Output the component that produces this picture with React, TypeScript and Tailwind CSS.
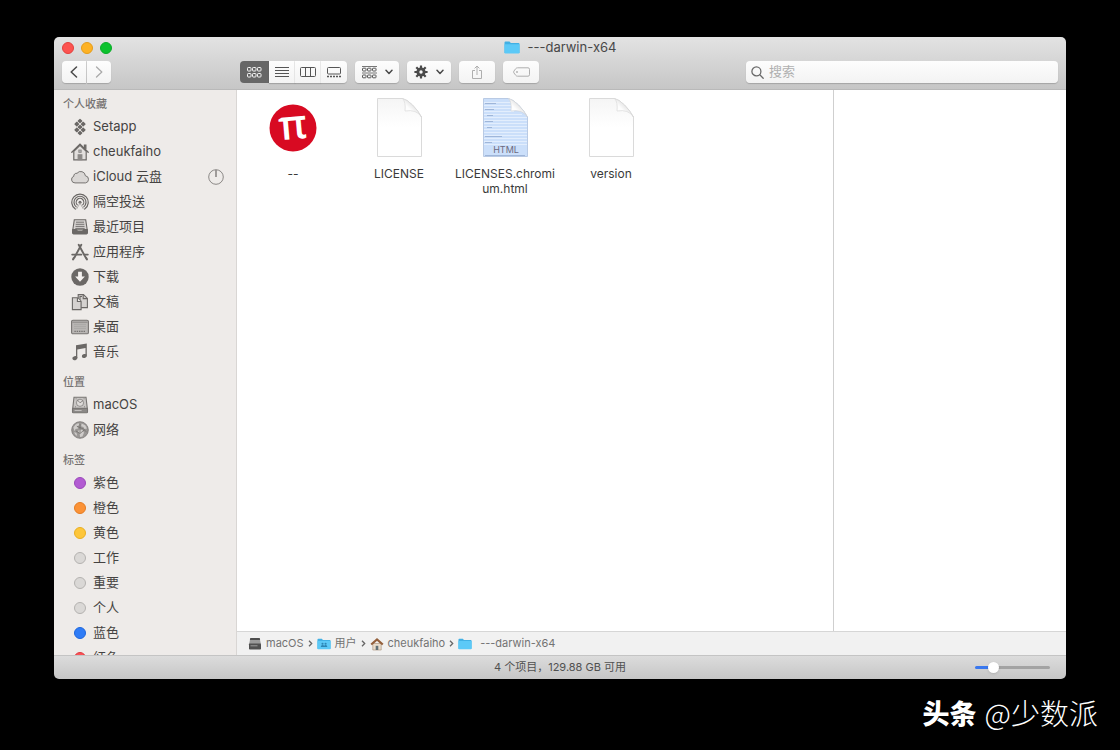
import React from 'react';
import clsx from 'clsx';

type IconProps = { className?: string };

const SetappIcon = () => (
  <svg viewBox="0 0 18 18" className="w-[18px] h-[18px]" fill="#6b6866">
    <rect x="7.2" y="1.2" width="3.6" height="3.6" rx="0.6" transform="rotate(45 9 3)" />
    <rect x="3.9" y="4.2" width="3.8" height="3.8" rx="0.6" transform="rotate(45 5.8 6.1)" />
    <rect x="10.3" y="4.2" width="3.8" height="3.8" rx="0.6" transform="rotate(45 12.2 6.1)" />
    <rect x="7.2" y="7.2" width="3.6" height="3.6" rx="0.6" transform="rotate(45 9 9)" />
    <rect x="3.9" y="10" width="3.8" height="3.8" rx="0.6" transform="rotate(45 5.8 11.9)" />
    <rect x="10.3" y="10" width="3.8" height="3.8" rx="0.6" transform="rotate(45 12.2 11.9)" />
    <rect x="7.2" y="13.2" width="3.6" height="3.6" rx="0.6" transform="rotate(45 9 15)" />
  </svg>
);

const HomeIcon = () => (
  <svg viewBox="0 0 18 18" className="w-[18px] h-[18px]" fill="none" stroke="#6b6866" strokeWidth="1.2">
    <path d="M2.8 8.2v8.6h12.4V8.2L9 2.4z" fill="#e2dfdd" />
    <path d="M.8 9.2 9 1.2l8.2 8" strokeLinecap="round" strokeWidth="1.3" />
    <path d="M13.4 5V2.2h1.5v4" fill="#6b6866" />
    <path d="M7.2 16.6v-4.8h3.6v4.8z" fill="#8b8886" stroke="#8b8886" />
    <rect x="7.8" y="7" width="2.4" height="2.4" fill="#aaa" stroke="#8b8886" strokeWidth="0.8" />
  </svg>
);

const CloudIcon = () => (
  <svg viewBox="0 0 18 18" className="w-[18px] h-[18px]" fill="#dad7d5" stroke="#777472" strokeWidth="1">
    <path d="M4 14.9A3.4 3.4 0 0 1 2.8 8.3a2.7 2.7 0 0 1 3.2-3A4.7 4.7 0 0 1 14.4 7.800a3.600 3.600 0 0 1 .2 7.100z" />
  </svg>
);

const AirDropIcon = () => (
  <svg viewBox="0 0 18 18" className="w-[18px] h-[18px]" fill="none" stroke="#6b6866" strokeWidth="1.2" strokeLinecap="round">
    <path d="M4.3 16.1a8.2 8.2 0 1 1 9.4 0" />
    <path d="M5.2 13.9a6 6 0 1 1 7.6 0" />
    <path d="M6.3 11.9a3.8 3.8 0 1 1 5.4 0" />
    <circle cx="9" cy="9.3" r="1.5" fill="#6b6866" stroke="none" />
    <path d="m9 10-3.2 5.8M9 10l3.2 5.8" strokeWidth="0.8" stroke="#a5a2a0" />
  </svg>
);

const RecentsIcon = () => (
  <svg viewBox="0 0 18 18" className="w-[18px] h-[18px]" fill="none" stroke="#6b6866">
    <path d="M3.3 1.8h11.4l1.5 9.9H1.8z" fill="#d5d2d0" strokeWidth="1.1" />
    <path d="M5 4.2h8M4.7 6.3h8.6M4.5 8.4h9M4.3 10.4h9.4" strokeWidth="0.9" />
    <path d="M1.5 11.5h4l1 1.6h5l1-1.6h4V15q0 1-1 1h-13q-1 0-1-1z" fill="#6b6866" />
  </svg>
);

const AppsIcon = () => (
  <svg viewBox="0 0 18 18" className="w-[18px] h-[18px]" fill="none" stroke="#6b6866" strokeWidth="1.9" strokeLinecap="round">
    <path d="M10.3 1.8 3.6 14.2M7.7 1.8l6.9 12.600" />
    <path d="M1.2 11.6h9.200M13.400 11.6h3.400" />
    <path d="m3 14.800-.9 1.500M15 14.800l.9 1.500" strokeWidth="2.2" />
  </svg>
);

const DownloadIcon = () => (
  <svg viewBox="0 0 18 18" className="w-[18px] h-[18px]">
    <circle cx="9" cy="9" r="8.7" fill="#6b6866" />
    <path d="M7.1 3.8h3.8v4.600h3L9 13.800 4.100 8.400h3z" fill="#f4f1ef" />
  </svg>
);

const DocumentsIcon = () => (
  <svg viewBox="0 0 18 18" className="w-[18px] h-[18px]" fill="#d5d2d0" stroke="#6b6866" strokeWidth="1.1">
    <path d="M7.2 1.6h5.3l3.9 3.8v9.2H7.2z" />
    <path d="M12.2 1.8v3.8h4M9 8.4V3.5h2" fill="none" />
    <path d="M1.4 4.8h5l3.7 3.5v8.3H1.4z" />
    <path d="M6.4 4.9v3.6h3.6" fill="#efecea" />
  </svg>
);

const DesktopIcon = () => (
  <svg viewBox="0 0 18 18" className="w-[18px] h-[18px]">
    <rect x="0.6" y="2.200" width="16.8" height="13.6" rx="1.4" fill="#b9b6b4" stroke="#777472" strokeWidth="1.1" />
    <path d="M1.4 4.2h15.2" stroke="#8a8785" strokeWidth="1" />
    <path d="M3 6.4h12M3 8.4h12M3 10.4h12" stroke="#a19e9c" strokeWidth="0.6" />
    <path d="M3.4 13.4h11.2" stroke="#777472" strokeWidth="1.4" strokeDasharray="1.4 0.9" />
  </svg>
);

const MusicIcon = () => (
  <svg viewBox="0 0 18 18" className="w-[18px] h-[18px]" fill="#6b6866">
    <path d="M5 2.200 15.800.4v12.200h-1.300V4.900l-8.200 1.500v8.500H5z" />
    <ellipse cx="3.900" cy="15.200" rx="2.600" ry="2" transform="rotate(-15 3.900 15.200)" />
    <ellipse cx="13.400" cy="13" rx="2.600" ry="2" transform="rotate(-15 13.400 13)" />
  </svg>
);

const DiskIcon = () => (
  <svg viewBox="0 0 18 18" className="w-[18px] h-[18px]" stroke="#777472">
    <path d="M3 1.2h12l1.3 11.3H1.7z" fill="#c9c6c4" strokeWidth="1.1" />
    <rect x="1.5" y="12.3" width="15" height="4.4" rx="0.8" fill="#8b8886" strokeWidth="1.1" />
    <circle cx="9" cy="6.8" r="3.6" fill="#dedbd9" strokeWidth="0.7" />
    <path d="m6.4 4 2.6 2.8L12 4.6M4.6 2.8h1M12.6 2.8h1M4 10.8h1M13 10.8h1" fill="none" strokeWidth="0.8" />
    <path d="M3.6 14.5h7" stroke="#c9c6c4" strokeWidth="0.9" />
  </svg>
);

const NetworkIcon = () => (
  <svg viewBox="0 0 18 18" className="w-[18px] h-[18px]">
    <circle cx="9" cy="9" r="8.3" fill="#9a9795" stroke="#777472" strokeWidth="0.8" />
    <path d="M2.4 6.4Q4 3 7.4 1.9l.9 2-2 1.4.8 2.2-2.6.5-1 2.2z" fill="#cfccca" />
    <path d="m10.6 2.4 3.6 1.8 1.8 3.2-2.5.7-1.1-2-2.2-.8z" fill="#cfccca" />
    <path d="m8.2 8.6 3.3.4 1.5 2.8-1.6 3.8-2.3.5-.5-3.5-1.5-2z" fill="#cfccca" />
    <path d="m3 11.2 2.4.6.8 3-1.4-.6z" fill="#cfccca" />
    <path d="M5.8 5.2 12.4 8l3.2 3M5 10l4 2.6 4.4-3.8M9 3v9" stroke="#6b6866" strokeWidth="0.7" fill="none" />
  </svg>
);

const FolderIcon: React.FC<IconProps> = ({ className }) => (
  <svg viewBox="0 0 16 13" className={className}>
    <path d="M.5 1.6q0-1 1-1h4l1.3 1.3h7.7q1 0 1 1v9H.5z" fill="#41b0e4" />
    <path d="M.5 3.2h15v8.4q0 .9-.9.9H1.4q-.9 0-.9-.9z" fill="#5cc9f7" />
  </svg>
);

const UsersFolderIcon = () => (
  <svg viewBox="0 0 16 13" className="w-[14px] h-[12px]">
    <path d="M.5 1.6q0-1 1-1h4l1.3 1.3h7.7q1 0 1 1v9H.5z" fill="#41b0e4" />
    <path d="M.5 3.2h15v8.4q0 .9-.9.9H1.4q-.9 0-.9-.9z" fill="#5cc9f7" />
    <circle cx="6.3" cy="6.2" r="1.2" fill="#2d86b5" />
    <circle cx="9.8" cy="6.2" r="1.2" fill="#2d86b5" />
    <path d="M4.3 10q0-2.400 2-2.400t1.800 1.400Q8.200 7.600 9.800 7.600q2 0 2 2.400z" fill="#2d86b5" />
  </svg>
);

const DriveIcon = () => (
  <svg viewBox="0 0 14 14" className="w-[14px] h-[14px]">
    <path d="M2.4 1h9.2L13 7.500H1z" fill="#9a9a9a" />
    <path d="M2.4 1h9.2l.5 2H1.900z" fill="#4e4e4e" />
    <rect x="1" y="6.500" width="12" height="6" rx="0.800" fill="#505050" />
    <path d="M2.500 8.800h7" stroke="#9a9a9a" />
  </svg>
);

const SmallHomeIcon = () => (
  <svg viewBox="0 0 14 14" className="w-[14px] h-[14px]">
    <path d="M2.8 6.500h8.400V13H2.800z" fill="#e9dccb" stroke="#a58c72" strokeWidth="0.600" />
    <path d="M1.200 7.500 7 2.400l5.800 5.100" fill="none" stroke="#94603c" strokeWidth="2.200" />
    <path d="M5.700 8.800h2.600V13H5.700z" fill="#5f6f77" />
  </svg>
);

const PiIcon = () => (
  <svg viewBox="0 0 64 64" className="w-16 h-16">
    <circle cx="32" cy="32" r="23.5" fill="#d80a22" />
    <text
      x="32"
      y="43"
      textAnchor="middle"
      fontSize="41"
      fontWeight="600"
      fill="#fff"
      fontFamily="'Open Sans', sans-serif"
      transform="rotate(-5 32 32)"
    >
      π
    </text>
  </svg>
);

const PageIcon: React.FC<{ html?: boolean }> = ({ html }) => (
  <svg viewBox="0 0 64 64" className="w-16 h-16">
    <defs>
      <linearGradient id="curl" x1="0" y1="1" x2="1" y2="0">
        <stop offset="0" stopColor="#fff" />
        <stop offset="0.4" stopColor="#fdfdfd" />
        <stop offset="0.6" stopColor="#e6e6e6" />
        <stop offset="1" stopColor="#fafafa" />
      </linearGradient>
      <linearGradient id="paper" x1="0" y1="0" x2="0" y2="1">
        <stop offset="0" stopColor="#f5f5f5" />
        <stop offset="0.5" stopColor="#fff" />
      </linearGradient>
    </defs>
    <path
      d="M10.5 2.5h25q4.500 1 10 6.500t9 12v39.500h-44z"
      fill={html ? '#cbdffa' : 'url(#paper)'}
      stroke={html ? '#b9cae4' : '#dadada'}
      strokeWidth="1"
    />
    {html && (
      <>
        <g fill="none">
          <path d="M11 6.500h27M11 9.500h28M11 12.500h28M11 15.500h30M11 18.500h38M11 21.500h43M11 24.500h43M11 27.500h43M11 30.500h43M11 33.500h43M11 36.500h43M11 39.500h43M11 42.500h43M11 45.500h43M11 48.500h43" stroke="#e3eefd" />
          <path d="M12 7.500h11M12 13.500h9M14 19.500h6M12 25.500h8M14 31.500h5M12 40.500h17M12 46.500h7M12 59.500h40" stroke="#9fb6d9" />
        </g>
        <text x="33" y="57" textAnchor="middle" fontSize="9" fill="#6d6a80" fontFamily="Inter, sans-serif">HTML</text>
      </>
    )}
    <path d="M35.500 2.500q3.500 3.500 2.500 12.500 11.500-2 16.500 6-3.500-6.500-9-12t-10-6.500z" fill="url(#curl)" stroke="#d4d4d4" strokeWidth="0.6" />
  </svg>
);

const ChevronDown = () => (
  <svg viewBox="0 0 8 6" className="w-2 h-1.5" fill="none" stroke="#4a4a4a" strokeWidth="1.5" strokeLinecap="round" strokeLinejoin="round">
    <path d="m1 1.2 3 3.2 3-3.2" />
  </svg>
);

const GridGlyph = () => (
  <svg viewBox="0 0 15 11" className="w-[15px] h-[11px]" fill="none" stroke="#f5f5f5" strokeWidth="1">
    {[0.5, 5.5, 10.5].map((x) => (
      <g key={x}>
        <rect x={x} y="0.5" width="3.5" height="3.5" rx="0.8" />
        <rect x={x} y="6.5" width="3.5" height="3.5" rx="0.8" />
      </g>
    ))}
  </svg>
);

const ListGlyph = () => (
  <svg viewBox="0 0 14 11" className="w-[14px] h-[11px]" stroke="#555">
    <path d="M0 .5h14M0 3.500h14M0 6.500h14M0 9.500h14" />
  </svg>
);

const ColumnsGlyph = () => (
  <svg viewBox="0 0 16 11" className="w-4 h-[11px]" fill="none" stroke="#555">
    <rect x="0.5" y="0.5" width="15" height="9" rx="1" />
    <path d="M5.500.5v9M10.500.5v9" />
  </svg>
);

const GalleryGlyph = () => (
  <svg viewBox="0 0 14 11" className="w-[14px] h-[11px]" fill="none" stroke="#555">
    <rect x="0.5" y="0.5" width="13" height="6.500" rx="1" />
    <path d="M0 9.500h14" strokeWidth="1.5" strokeDasharray="2 1" />
  </svg>
);

const ArrangeGlyph = () => (
  <svg viewBox="0 0 15 13" className="w-[15px] h-[13px]" fill="none" stroke="#555" strokeWidth="1">
    <path d="M0 .5h15M0 7h15" strokeWidth="0.8" />
    {[0.5, 5.5, 10.5].map((x) => (
      <g key={x}>
        <rect x={x} y="2.2" width="3.5" height="2.8" rx="0.6" />
        <rect x={x} y="9" width="3.5" height="2.8" rx="0.6" />
      </g>
    ))}
  </svg>
);

const GearGlyph = () => (
  <svg viewBox="0 0 14 14" className="w-3.5 h-3.5">
    <path d="M7 .4v13.2M.4 7h13.2M2.3 2.3l9.4 9.4M11.7 2.3l-9.4 9.4" stroke="#4a4a4a" strokeWidth="2.2" />
    <circle cx="7" cy="7" r="4.6" fill="#4a4a4a" />
    <circle cx="7" cy="7" r="1.7" fill="#f8f8f8" />
  </svg>
);

const ShareGlyph = () => (
  <svg viewBox="0 0 12 15" className="w-3 h-[15px]" fill="none" stroke="#aeaeae">
    <path d="M4 5.500H1.500v8h9v-8H8M6 10V1.200M3.600 3.400 6 1l2.400 2.400" />
  </svg>
);

const TagGlyph = () => (
  <svg viewBox="0 0 17 10" className="w-[17px] h-2.5" fill="none" stroke="#aeaeae">
    <path d="M4.500.8H15q1.500 0 1.500 1.500v5.400q0 1.500-1.500 1.500H4.500q-1 0-1.700-.8L.9 5.900q-.5-.9 0-1.800l1.900-2.500q.7-.8 1.700-.8z" />
    <circle cx="4" cy="5" r="0.6" />
  </svg>
);

const favorites = [
  { name: 'Setapp', icon: SetappIcon },
  { name: 'cheukfaiho', icon: HomeIcon },
  { name: 'iCloud 云盘', icon: CloudIcon, syncing: true },
  { name: '隔空投送', icon: AirDropIcon },
  { name: '最近项目', icon: RecentsIcon },
  { name: '应用程序', icon: AppsIcon },
  { name: '下载', icon: DownloadIcon },
  { name: '文稿', icon: DocumentsIcon },
  { name: '桌面', icon: DesktopIcon },
  { name: '音乐', icon: MusicIcon },
];

const locations = [
  { name: 'macOS', icon: DiskIcon },
  { name: '网络', icon: NetworkIcon },
];

const tags = [
  { name: '紫色', color: 'bg-[#b25bd2] border-[#9a48ba]' },
  { name: '橙色', color: 'bg-[#fb9236] border-[#e57c22]' },
  { name: '黄色', color: 'bg-[#fdc63a] border-[#e9ae22]' },
  { name: '工作', color: 'bg-[#dad8d6] border-[#b4b2b0]' },
  { name: '重要', color: 'bg-[#dad8d6] border-[#b4b2b0]' },
  { name: '个人', color: 'bg-[#dad8d6] border-[#b4b2b0]' },
  { name: '蓝色', color: 'bg-[#2f7cf6] border-[#1f66dc]' },
  { name: '红色', color: 'bg-[#fb5257] border-[#dd3a40]' },
];

const files = [
  { name: '--', icon: <PiIcon /> },
  { name: 'LICENSE', icon: <PageIcon /> },
  { name: 'LICENSES.chromium.html', icon: <PageIcon html /> },
  { name: 'version', icon: <PageIcon /> },
];

const path = [
  { name: 'macOS', icon: <DriveIcon /> },
  { name: '用户', icon: <UsersFolderIcon /> },
  { name: 'cheukfaiho', icon: <SmallHomeIcon /> },
  { name: '---darwin-x64', icon: <FolderIcon className="w-[14px] h-[12px] mr-1" /> },
];

const buttonStyle =
  'h-[22px] flex items-center justify-center bg-linear-to-b from-[#fdfdfd] to-[#f3f3f3] shadow-[0_1px_1px_rgba(0,0,0,0.18)]';

const SectionTitle: React.FC<{ children: React.ReactNode }> = ({ children }) => (
  <h2 className="h-5 pl-[9px] flex items-center text-[11px] font-medium text-[#757271]">{children}</h2>
);

const SidebarRow: React.FC<{ name: string; children: React.ReactNode; syncing?: boolean }> = ({ name, children, syncing }) => (
  <li>
    <a href="#" className="h-[25px] pl-[17px] pr-3 flex items-center gap-1 text-[13px] text-[#454342] whitespace-nowrap">
      <span className="w-[18px] flex justify-center shrink-0">{children}</span>
      {name}
      {syncing && (
        <svg viewBox="0 0 16 16" className="w-4 h-4 ml-auto" fill="none" stroke="#8b8886">
          <circle cx="8" cy="8" r="7.3" />
          <path d="M8 8V1" strokeWidth="1.6" />
        </svg>
      )}
    </a>
  </li>
);

const Toolbar = () => (
  <header className="h-[53px] shrink-0 bg-linear-to-b from-[#e3e3e3] to-[#c6c6c6] border-b border-[#b9b9b9]">
    <div className="h-[21px] px-2 grid grid-cols-[1fr_auto_1fr] items-center">
      <div className="flex gap-[7px]">
        <button aria-label="关闭" className="w-3 h-3 rounded-full bg-[#fc5350] border border-[#e2403d]" />
        <button aria-label="最小化" className="w-3 h-3 rounded-full bg-[#fdb225] border border-[#e49c1b]" />
        <button aria-label="缩放" className="w-3 h-3 rounded-full bg-[#0cc22e] border border-[#0aac28]" />
      </div>
      <h1 className="flex items-center gap-2 text-[13px] text-[#484848]">
        <FolderIcon className="w-4 h-[13px]" />
        ---darwin-x64
      </h1>
    </div>
    <div className="px-2 pt-[3px] flex items-center gap-2">
      <div className="w-[170px] shrink-0 flex gap-px">
        <button aria-label="后退" className={clsx(buttonStyle, 'w-6 rounded-l')}>
          <svg viewBox="0 0 8 12" className="w-2 h-3" fill="none" stroke="#4a4a4a" strokeWidth="1.5" strokeLinecap="round" strokeLinejoin="round">
            <path d="M6.5 1 1.2 6l5.3 5" />
          </svg>
        </button>
        <button aria-label="前进" className={clsx(buttonStyle, 'w-6 rounded-r')}>
          <svg viewBox="0 0 8 12" className="w-2 h-3" fill="none" stroke="#aaa" strokeWidth="1.3" strokeLinecap="round" strokeLinejoin="round">
            <path d="m1.5 1 5.3 5-5.3 5" />
          </svg>
        </button>
      </div>
      <div className="shrink-0 flex">
        <button aria-label="图标" className="w-[29px] h-[22px] flex items-center justify-center rounded-l bg-[#666]"><GridGlyph /></button>
        <button aria-label="列表" className={clsx(buttonStyle, 'w-[26px] border-r border-[#ececec]')}><ListGlyph /></button>
        <button aria-label="分栏" className={clsx(buttonStyle, 'w-[26px] border-r border-[#ececec]')}><ColumnsGlyph /></button>
        <button aria-label="画廊" className={clsx(buttonStyle, 'w-[26px] rounded-r')}><GalleryGlyph /></button>
      </div>
      <button aria-label="排列" className={clsx(buttonStyle, 'w-11 shrink-0 gap-2 rounded')}>
        <ArrangeGlyph />
        <ChevronDown />
      </button>
      <button aria-label="操作" className={clsx(buttonStyle, 'w-11 shrink-0 gap-2 rounded')}>
        <GearGlyph />
        <ChevronDown />
      </button>
      <button aria-label="共享" className={clsx(buttonStyle, 'w-9 shrink-0 rounded')}><ShareGlyph /></button>
      <button aria-label="标签" className={clsx(buttonStyle, 'w-9 shrink-0 rounded')}><TagGlyph /></button>
      <label className={clsx(buttonStyle, 'ml-auto w-[312px] gap-[5px] px-[5px] rounded')}>
        <svg viewBox="0 0 13 13" className="w-[13px] h-[13px] shrink-0" fill="none" stroke="#6a6a6a" strokeWidth="1.3" strokeLinecap="round">
          <circle cx="5.4" cy="5.4" r="4.5" />
          <path d="m8.8 8.8 3.4 3.4" />
        </svg>
        <input type="search" aria-label="搜索" placeholder="搜索" className="flex-1 min-w-0 bg-transparent text-[13px] outline-none placeholder:text-[#b0b0b0]" />
      </label>
    </div>
  </header>
);

const Sidebar = () => (
  <aside className="w-[183px] shrink-0 pt-1 overflow-hidden bg-[#eeebe9] border-r border-[#d9d6d4]">
    <SectionTitle>个人收藏</SectionTitle>
    <ul className="mb-2">
      {favorites.map(({ name, icon: Icon, syncing }) => (
        <SidebarRow key={name} name={name} syncing={syncing}><Icon /></SidebarRow>
      ))}
    </ul>
    <SectionTitle>位置</SectionTitle>
    <ul className="mb-2">
      {locations.map(({ name, icon: Icon }) => (
        <SidebarRow key={name} name={name}><Icon /></SidebarRow>
      ))}
    </ul>
    <SectionTitle>标签</SectionTitle>
    <ul>
      {tags.map((tag) => (
        <SidebarRow key={tag.name} name={tag.name}>
          <span className={clsx('w-3 h-3 rounded-full border', tag.color)} />
        </SidebarRow>
      ))}
    </ul>
  </aside>
);

export default function App() {
  const [size, setSize] = React.useState(21);

  return (
    <div className="h-screen flex flex-col bg-black px-[54px] pt-[37px] font-['Inter','Noto_Sans_CJK_SC',sans-serif]">
      <div className="flex-1 min-h-0 flex flex-col rounded-[5px] overflow-hidden">
        <Toolbar />

        <div className="flex-1 min-h-0 flex">
          <Sidebar />
          <div className="flex-1 min-w-0 flex flex-col bg-white">
            <div className="flex-1 min-h-0 flex">
              <main className="flex-1 min-w-0 flex flex-wrap content-start pl-[3px] pt-1.5">
                {files.map((file) => (
                  <button key={file.name} className="w-[106px] flex flex-col items-center gap-1.5 text-xs leading-[15px] text-[#3a3a3a]">
                    {file.icon}
                    <span className="w-full px-px break-all">{file.name}</span>
                  </button>
                ))}
              </main>
              <section aria-label="预览" className="w-[233px] shrink-0 border-l border-[#cfcfcf]" />
            </div>

            {/* Path bar */}
            <nav className="h-6 shrink-0 pl-[11px] flex items-center gap-1 bg-[#f1f1f1] border-t border-[#d6d6d6] text-[11px] text-[#737373]">
              {path.map((part, i) => (
                <React.Fragment key={part.name}>
                  {i > 0 && (
                    <svg viewBox="0 0 5 7" className="w-[5px] h-[7px]" fill="none" stroke="#666" strokeWidth="1.3">
                      <path d="m1 .8 2.7 2.7L1 6.2" />
                    </svg>
                  )}
                  <a href="#" className="flex items-center gap-1">
                    {part.icon}
                    {part.name}
                  </a>
                </React.Fragment>
              ))}
            </nav>
          </div>
        </div>

        {/* Status bar */}
        <footer className="h-6 shrink-0 px-4 grid grid-cols-[1fr_auto_1fr] items-center bg-linear-to-b from-[#dcdcdc] to-[#c6c6c6] border-t border-[#c4c4c4]">
          <p className="col-start-2 text-[11px] text-[#505050]">4 个项目，129.88 GB 可用</p>
          <input
            type="range"
            aria-label="图标大小"
            value={size}
            onChange={(e) => setSize(Number(e.target.value))}
            className="justify-self-end w-[75px] h-[3px] appearance-none rounded-full [&::-webkit-slider-thumb]:appearance-none [&::-webkit-slider-thumb]:w-[11px] [&::-webkit-slider-thumb]:h-[11px] [&::-webkit-slider-thumb]:rounded-full [&::-webkit-slider-thumb]:bg-white [&::-webkit-slider-thumb]:shadow"
            style={{ background: `linear-gradient(to right, #3a78ee ${size}%, #a3a3a3 ${size}%)` }}
          />
        </footer>
      </div>

      <div className="h-[71px] shrink-0 -mr-8 pb-1 flex items-center justify-end gap-2 leading-none text-white font-['Noto_Sans_CJK_SC',sans-serif]">
        <span className="text-[27px] font-black">头条</span>
        <span className="text-[29px] font-light">@少数派</span>
      </div>
    </div>
  );
}
